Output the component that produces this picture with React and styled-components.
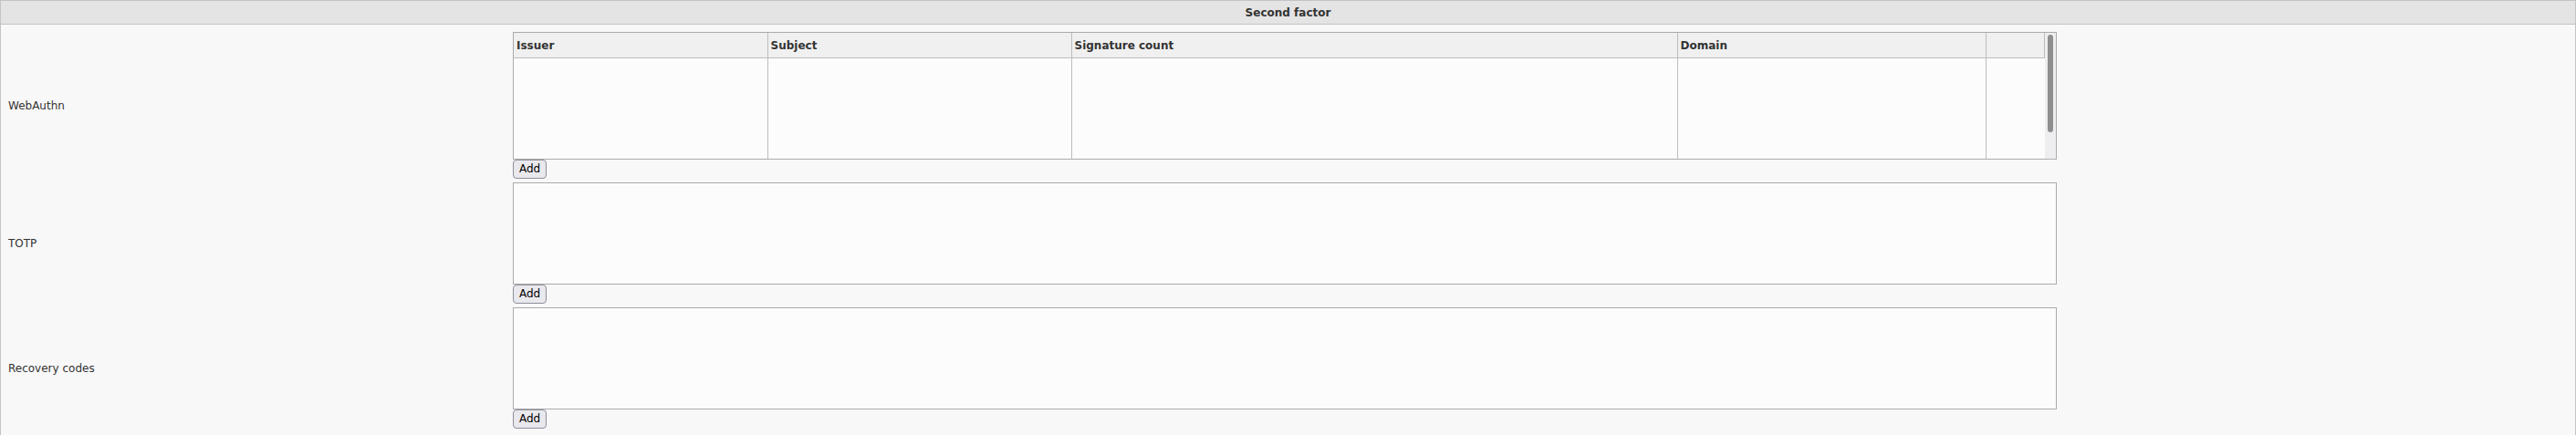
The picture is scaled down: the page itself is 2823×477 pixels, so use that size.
import React from 'react'
import styled, { createGlobalStyle } from 'styled-components'

const GlobalStyle = createGlobalStyle`
  html, body {
    margin: 0;
    padding: 0;
    background: #f8f8f8;
  }
  body {
    font-family: "DejaVu Sans", "Liberation Sans", sans-serif;
    font-size: 12px;
    color: #333;
  }
`;

const Panel = styled.section`
  border: 1px solid #c4c4c4;
  background: #f8f8f8;
  min-height: 500px;
  box-sizing: border-box;
`;

const PanelTitle = styled.header`
  height: 25px;
  display: flex;
  align-items: center;
  justify-content: center;
  background: #e4e4e4;
  border-bottom: 1px solid #c4c4c4;
  font-weight: bold;
  font-size: 12px;
  color: #333;
`;

const Body = styled.div`
  padding-top: 6px;
`;

const Row = styled.div`
  display: grid;
  grid-template-columns: 561px 1692px;
  align-items: center;
  padding: 2px 0;
`;

const Label = styled.div`
  padding-left: 8px;
  color: #333;
`;

const Field = styled.div`
  display: flex;
  flex-direction: column;
  align-items: flex-start;
`;

const Frame = styled.div`
  width: 100%;
  height: ${p => p.$height}px;
  box-sizing: border-box;
  border: 1px solid #ababab;
  background: #fcfcfc;
  display: flex;
`;

const TableArea = styled.div`
  flex: 1;
  min-width: 0;
`;

const Grid = styled.table`
  width: 100%;
  height: 100%;
  border-collapse: collapse;
  table-layout: fixed;
`;

const Head = styled.th`
  height: 27px;
  padding: 0 3px;
  text-align: left;
  font-weight: bold;
  font-size: 12px;
  color: #333;
  background: #f0f0f0;
  border-bottom: 1px solid #bdbdbd;
  border-right: 1px solid #bdbdbd;
`;

const Cell = styled.td`
  padding: 0;
  border-right: ${p => (p.$last ? 'none' : '1px solid #bdbdbd')};
`;

const ScrollTrack = styled.div`
  width: 12px;
  flex: none;
  background: #eeeef0;
  padding-top: 2px;
  box-sizing: border-box;
  display: flex;
  justify-content: center;
`;

const Thumb = styled.div`
  width: 6px;
  height: 107px;
  border-radius: 3px;
  background: #8f8f8f;
`;

const AddButton = styled.button`
  height: 21px;
  padding: 0 6px;
  margin: 0;
  font-family: "DejaVu Sans", "Liberation Sans", sans-serif;
  font-size: 12px;
  color: #000;
  background: #e9e9ed;
  border: 1px solid #8f8f9d;
  border-radius: 4px;
  line-height: 19px;
`;

const columns = [
  { title: 'Issuer', width: 278 },
  { title: 'Subject', width: 333 },
  { title: 'Signature count', width: 664 },
  { title: 'Domain', width: 338 },
  { title: '', width: null },
];

function CredentialTable() {
  return (
    <Frame $height={140}>
      <TableArea>
        <Grid>
          <colgroup>
            {columns.map((c, i) => (
              <col key={i} style={c.width ? { width: c.width } : undefined} />
            ))}
          </colgroup>
          <thead>
            <tr>
              {columns.map((c, i) => (
                <Head key={i}>{c.title}</Head>
              ))}
            </tr>
          </thead>
          <tbody>
            <tr>
              {columns.map((c, i) => (
                <Cell key={i} $last={i === columns.length - 1} />
              ))}
            </tr>
          </tbody>
        </Grid>
      </TableArea>
      <ScrollTrack>
        <Thumb />
      </ScrollTrack>
    </Frame>
  );
}

function FactorRow({ label, children }) {
  return (
    <Row>
      <Label>{label}</Label>
      <Field>
        {children}
        <AddButton type="button">Add</AddButton>
      </Field>
    </Row>
  );
}

export default function App() {
  return (
    <>
      <GlobalStyle />
      <Panel>
        <PanelTitle>Second factor</PanelTitle>
        <Body>
          <FactorRow label="WebAuthn">
            <CredentialTable />
          </FactorRow>
          <FactorRow label="TOTP">
            <Frame $height={112} />
          </FactorRow>
          <FactorRow label="Recovery codes">
            <Frame $height={112} />
          </FactorRow>
        </Body>
      </Panel>
    </>
  );
}
